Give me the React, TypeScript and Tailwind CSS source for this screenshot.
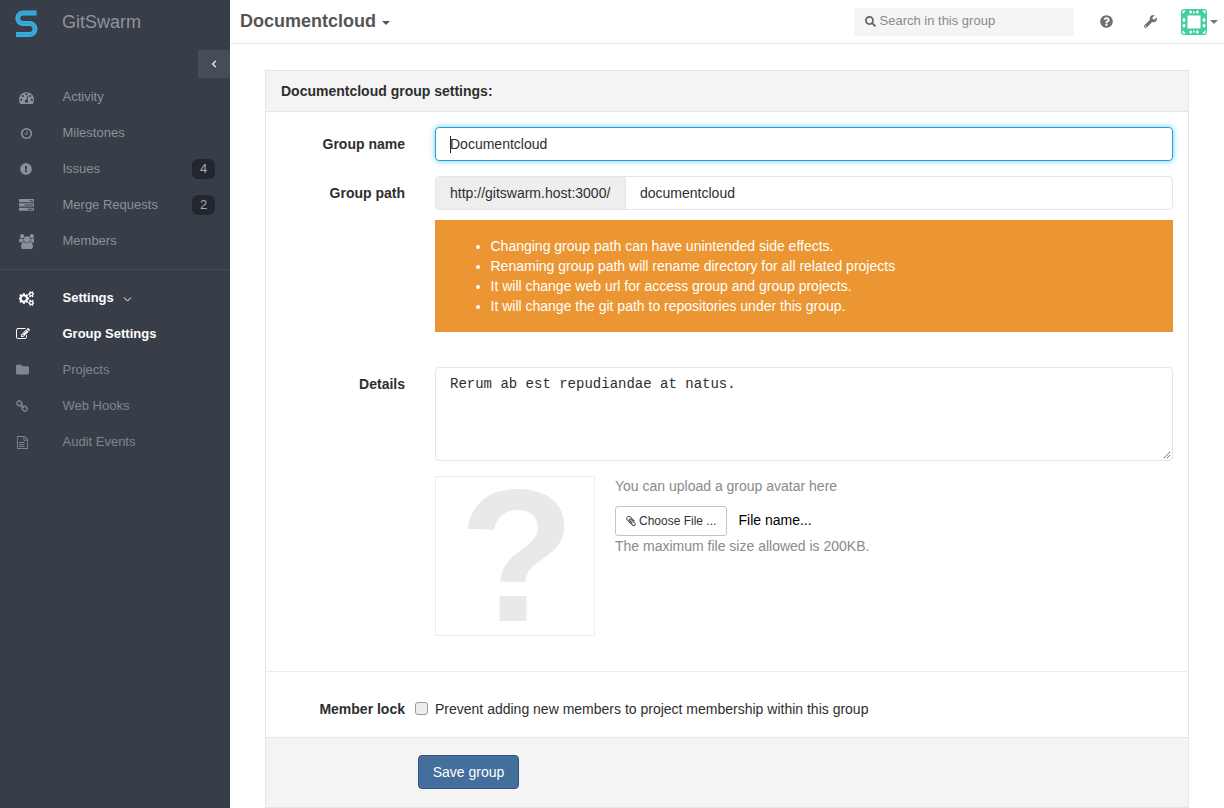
import React from "react";
import { FaExclamationCircle, FaFolder, FaQuestionCircle, FaWrench, FaSearch, FaChevronLeft } from "react-icons/fa";

const P = {
  dashboard: "M384 1152q0-53-37.500-90.500t-90.500-37.500-90.500 37.500-37.500 90.500 37.500 90.500 90.500 37.500 90.500-37.500 37.500-90.500zm192-448q0-53-37.500-90.500t-90.500-37.500-90.500 37.500-37.500 90.500 37.500 90.500 90.500 37.500 90.500-37.500 37.500-90.500zm428 481l101-382q6-26-7.500-48.500t-38.500-29.500-48 6.500-30 39.500l-101 382q-60 5-107 43.500t-63 98.500q-20 77 20 146t117 89 146-20 89-117q16-60-6-117t-72-91zm660-33q0-53-37.500-90.500t-90.500-37.500-90.500 37.500-37.500 90.500 37.500 90.500 90.500 37.500 90.500-37.500 37.500-90.500zm-640-640q0-53-37.500-90.500t-90.500-37.500-90.500 37.500-37.500 90.500 37.500 90.500 90.500 37.500 90.500-37.500 37.500-90.500zm448 192q0-53-37.500-90.500t-90.500-37.500-90.500 37.500-37.500 90.500 37.500 90.500 90.500 37.500 90.500-37.500 37.500-90.500zm320 448q0 261-141 483-19 29-54 29h-1402q-35 0-54-29-141-221-141-483 0-182 71-348t191-286 286-191 348-71 348 71 286 191 191 286 71 348z",
  clock: "M1024 544v448q0 14-9 23t-23 9h-320q-14 0-23-9t-9-23v-64q0-14 9-23t23-9h224v-352q0-14 9-23t23-9h64q14 0 23 9t9 23zm416 352q0-148-73-273t-198-198-273-73-273 73-198 198-73 273 73 273 198 198 273 73 273-73 198-198 73-273zm224 0q0 209-103 385.500t-279.500 279.500-385.500 103-385.500-103-279.500-279.500-103-385.500 103-385.500 279.500-279.500 385.500-103 385.500 103 279.500 279.500 103 385.500z",
  tasks: "M1024 1408h640v-128h-640v128zm-384-512h1024v-128h-1024v128zm640-512h384v-128h-384v128zm512 832v256q0 26-19 45t-45 19h-1664q-26 0-45-19t-19-45v-256q0-26 19-45t45-19h1664q26 0 45 19t19 45zm0-512v256q0 26-19 45t-45 19h-1664q-26 0-45-19t-19-45v-256q0-26 19-45t45-19h1664q26 0 45 19t19 45zm0-512v256q0 26-19 45t-45 19h-1664q-26 0-45-19t-19-45v-256q0-26 19-45t45-19h1664q26 0 45 19t19 45z",
  users: "M593 896q-162 5-265 128h-134q-82 0-138-40.500t-56-118.500q0-353 124-353 6 0 43.500 21t97.500 42.500 119 21.500q67 0 133-23-5 37-5 66 0 139 81 256zm1071 637q0 120-73 189.500t-194 69.500h-874q-121 0-194-69.500t-73-189.500q0-53 3.500-103.500t14-109 26.500-108.500 43-97.500 62-81 85.500-53.500 111.500-20q10 0 43 21.500t73 48 107 48 135 21.500 135-21.500 107-48 73-48 43-21.500q61 0 111.500 20t85.500 53.500 62 81 43 97.500 26.500 108.500 14 109 3.500 103.500zm-1024-1277q0 106-75 181t-181 75-181-75-75-181 75-181 181-75 181 75 75 181zm704 384q0 159-112.500 271.500t-271.500 112.500-271.500-112.500-112.500-271.500 112.500-271.500 271.500-112.500 271.500 112.500 112.500 271.500zm576 225q0 78-56 118.500t-138 40.500h-134q-103-123-265-128 81-117 81-256 0-29-5-66 66 23 133 23 59 0 119-21.500t97.500-42.500 43.500-21q124 0 124 353zm-128-609q0 106-75 181t-181 75-181-75-75-181 75-181 181-75 181 75 75 181z",
  cogs: "M832 896q0-106-75-181t-181-75-181 75-75 181 75 181 181 75 181-75 75-181zm768 512q0-52-38-90t-90-38-90 38-38 90q0 53 37.500 90.500t90.500 37.500 90.500-37.500 37.500-90.500zm0-1024q0-52-38-90t-90-38-90 38-38 90q0 53 37.500 90.500t90.500 37.500 90.500-37.500 37.500-90.500zm-384 421v185q0 10-7 19.500t-16 10.500l-155 24q-11 35-32 76 34 48 90 115 7 11 7 20 0 12-7 19-23 30-82.500 89.500t-78.500 59.500q-11 0-21-7l-115-90q-37 19-77 31-11 108-23 155-7 24-30 24h-186q-11 0-20-7.500t-10-17.500l-23-153q-34-10-75-31l-118 89q-7 7-20 7-11 0-21-8-144-133-144-160 0-9 7-19 10-14 41-53t47-61q-23-44-35-82l-152-24q-10-1-17-9.500t-7-19.500v-185q0-10 7-19.500t16-10.500l155-24q11-35 32-76-34-48-90-115-7-11-7-20 0-12 7-20 22-30 82-89t79-59q11 0 21 7l115 90q34-18 77-32 11-108 23-154 7-24 30-24h186q11 0 20 7.500t10 17.500l23 153q34 10 75 31l118-89q8-7 20-7 11 0 21 8 144 133 144 160 0 8-7 19-12 16-42 54t-45 60q23 48 34 82l152 23q10 2 17 10.500t7 19.500zm640 533v140q0 16-149 31-12 27-30 52 51 113 51 138 0 4-4 7-122 71-124 71-8 0-46-47t-52-68q-20 2-30 2t-30-2q-14 21-52 68t-46 47q-2 0-124-71-4-3-4-7 0-25 51-138-18-25-30-52-149-15-149-31v-140q0-16 149-31 13-29 30-52-51-113-51-138 0-4 4-7 4-2 35-20t59-34 30-16q8 0 46 46.500t52 67.500q20-2 30-2t30 2q51-71 92-112l6-2q4 0 124 70 4 3 4 7 0 25-51 138 17 23 30 52 149 15 149 31zm0-1024v140q0 16-149 31-12 27-30 52 51 113 51 138 0 4-4 7-122 71-124 71-8 0-46-47t-52-68q-20 2-30 2t-30-2q-14 21-52 68t-46 47q-2 0-124-71-4-3-4-7 0-25 51-138-18-25-30-52-149-15-149-31v-140q0-16 149-31 13-29 30-52-51-113-51-138 0-4 4-7 4-2 35-20t59-34 30-16q8 0 46 46.500t52 67.500q20-2 30-2t30 2q51-71 92-112l6-2q4 0 124 70 4 3 4 7 0 25-51 138 17 23 30 52 149 15 149 31z",
  edit: "M888 1184l116-116-152-152-116 116v56h96v96h56zm440-720q-16-16-33 1l-350 350q-17 17-1 33t33-1l350-350q17-17 1-33zm80 594v190q0 119-84.500 203.500t-203.500 84.500h-832q-119 0-203.500-84.500t-84.500-203.500v-832q0-119 84.500-203.500t203.500-84.500h832q63 0 117 25 15 7 18 23 3 17-9 29l-49 49q-14 14-32 8-23-6-45-6h-832q-66 0-113 47t-47 113v832q0 66 47 113t113 47h832q66 0 113-47t47-113v-126q0-13 9-22l64-64q15-15 35-7t20 29zm-96-738l288 288-672 672h-288v-288zm444 132l-92 92-288-288 92-92q28-28 68-28t68 28l152 152q28 28 28 68t-28 68z",
  link: "M1456 1216q0-40-28-68l-208-208q-28-28-68-28-42 0-72 32 3 3 19 18.500t21.500 21.500 15 19 13 25.500 3.500 27.500q0 40-28 68t-68 28q-15 0-27.500-3.500t-25.500-13-19-15-21.500-21.500-18.500-19q-33 31-33 73 0 40 28 68l206 207q27 27 68 27 40 0 68-26l147-146q28-28 28-67zm-703-705q0-40-28-68l-206-207q-28-28-68-28-39 0-68 27l-147 146q-28 28-28 67 0 40 28 68l208 208q27 27 68 27 42 0 72-31-3-3-19-18.500t-21.500-21.500-15-19-13-25.500-3.500-27.500q0-40 28-68t68-28q15 0 27.500 3.500t25.500 13 19 15 21.500 21.500 18.500 19q33-31 33-73zm895 705q0 120-85 203l-147 146q-83 83-203 83-121 0-204-85l-206-207q-83-83-83-203 0-123 88-209l-88-88q-86 88-208 88-120 0-204-84l-208-208q-84-84-84-204t85-203l147-146q83-83 203-83 121 0 204 85l206 207q83 83 83 203 0 123-88 209l88 88q86-88 208-88 120 0 204 84l208 208q84 84 84 204z",
  file: "M1596 380q28 28 48 76t20 88v1152q0 40-28 68t-68 28h-1344q-40 0-68-28t-28-68v-1600q0-40 28-68t68-28h896q40 0 88 20t76 48zm-444-244v376h376q-10-29-22-41l-313-313q-12-12-41-22zm384 1528v-1024h-416q-40 0-68-28t-28-68v-416h-768v1536h1280zm-1128-800q0-14 9-23t23-9h704q14 0 23 9t9 23v64q0 14-9 23t-23 9h-704q-14 0-23-9t-9-23v-64zm736 224q14 0 23 9t9 23v64q0 14-9 23t-23 9h-704q-14 0-23-9t-9-23v-64q0-14 9-23t23-9h704zm0 256q14 0 23 9t9 23v64q0 14-9 23t-23 9h-704q-14 0-23-9t-9-23v-64q0-14 9-23t23-9h704z",
  clip: "M1596 1385q0 117-79 196t-196 79q-135 0-235-100l-777-776q-113-115-113-271 0-159 110-270t269-111q158 0 273 113l605 606q10 10 10 22 0 16-30.500 46.500t-46.500 30.500q-13 0-23-10l-606-607q-79-77-181-77-106 0-179 75t-73 181q0 105 76 181l776 777q63 63 145 63 64 0 106-42t42-106q0-82-63-145l-581-581q-26-24-60-24-29 0-48 19t-19 48q0 32 25 59l410 410q10 10 10 22 0 16-31 47t-47 31q-12 0-22-10l-410-410q-63-61-63-149 0-82 57-139t139-57q88 0 149 63l581 581q100 98 100 235z",
};

function Fa({ d, size = 14, className = "" }: { d: string; size?: number; className?: string }) {
  return (
    <svg width={size} height={size} viewBox="0 0 1792 1792" fill="currentColor" className={className}>
      <path d={d} />
    </svg>
  );
}

function Logo() {
  const d = "M21.500 3H8A5.250 5.250 0 0 0 8 13.500H14.500A5.250 5.250 0 0 1 14.500 24.500H1";
  return (
    <svg width="23" height="28" viewBox="0 0 23 28" fill="none">
      <path d={d} stroke="#38addf" strokeWidth="5" />
      <path d={d} stroke="#2f96c9" strokeWidth="0.8" />
    </svg>
  );
}

function Identicon() {
  const tri = "M1.500 1.500h3.500l-3.500 3.500zM24.500 1.500v3.500l-3.500-3.500zM1.500 24.500v-3.500l3.500 3.500zM24.500 24.500h-3.500l3.500-3.500z";
  const arrows = "M9.500 1l1.800 2-1.800 2-1.300-2zM16.500 1l1.300 2-1.300 2-1.800-2zM9.500 21l1.800 2-1.800 2-1.300-2zM16.500 21l1.300 2-1.300 2-1.800-2zM3 8.500l1.800 2.500-1.800 2.500-1.800-2.500zM23 8.500l1.800 2.500-1.800 2.500-1.800-2.500zM3 14.500l1.800 2-1.800 2.500-1.800-2.500zM23 14.500l1.800 2-1.800 2.500-1.800-2.500zM12.200 2.500h1.600v2h-1.600zM12.200 21.500h1.600v2h-1.600z";
  return (
    <svg width="26" height="26" viewBox="0 0 26 26">
      <rect width="26" height="26" rx="3" fill="#42cfa0" />
      <rect x="6.500" y="6.500" width="13" height="13" fill="#fff" />
      <path d={tri} fill="#fff" />
      <path d={arrows} fill="#fff" />
    </svg>
  );
}

function Item({ icon, label, badge, indent = false, active = false, chevron = false, dim = false }: { icon: React.ReactNode; label: string; badge?: string; indent?: boolean; active?: boolean; chevron?: boolean; dim?: boolean }) {
  return (
    <div className={`h-9 flex items-center text-[13px] ${active ? "text-white font-bold" : dim ? "text-[#80868e]" : "text-[#8b9199]"}`}>
      <div className={`${indent ? "pl-4" : "pl-[19px]"} w-[62.5px] flex items-center shrink-0`}>{icon}</div>
      <span>{label}</span>
      {chevron && (
        <svg className="ml-[9px] mt-px" width="9" height="6" viewBox="0 0 9 6" fill="none">
          <path d="M1 1.500l3.500 3.500L8 1.500" stroke="currentColor" strokeWidth="1" />
        </svg>
      )}
      {badge && (
        <span className="ml-auto mr-[15px] w-[23px] h-5 rounded-[6px] bg-[#22262e] text-[#a4a9b0] font-normal text-[13px] flex items-center justify-center">{badge}</span>
      )}
    </div>
  );
}

export default function App() {
  return (
    <div className="flex h-[808px] w-[1224px] overflow-hidden bg-white text-[#2e2e2e] font-['Liberation_Sans',Arial,sans-serif] text-sm">
      <aside className="w-[230px] shrink-0 bg-[#383e48] flex flex-col">
        <div className="h-[50px] flex items-center pl-[15px] pb-[3px]">
          <Logo />
          <span className="ml-[24px] -mt-[2px] text-[18px] text-[#8e949c]">GitSwarm</span>
        </div>
        <div className="flex justify-end">
          <div className="w-8 h-7 bg-[#474d57] flex items-center justify-center text-white"><FaChevronLeft className="text-[8px]" /></div>
        </div>
        <nav className="mt-[1px]">
          <Item icon={<Fa d={P.dashboard} size={15} />} label="Activity" />
          <Item icon={<Fa d={P.clock} size={13} className="ml-px" />} label="Milestones" />
          <Item icon={<FaExclamationCircle className="text-[12px] ml-px" />} label="Issues" badge="4" />
          <Item icon={<Fa d={P.tasks} size={15} />} label="Merge Requests" badge="2" />
          <Item icon={<Fa d={P.users} size={15} />} label="Members" />
        </nav>
        <div className="border-t border-[#484e58] mt-[10px] mb-[10px]" />
        <nav>
          <Item icon={<Fa d={P.cogs} size={15} />} label="Settings" active chevron />
          <Item indent icon={<Fa d={P.edit} size={14} />} label="Group Settings" active />
          <Item indent dim icon={<FaFolder className="text-[13px] -mt-[2px]" />} label="Projects" />
          <Item indent dim icon={<Fa d={P.link} size={13} />} label="Web Hooks" />
          <Item indent dim icon={<Fa d={P.file} size={13} />} label="Audit Events" />
        </nav>
      </aside>

      <main className="flex-1 min-w-0 flex flex-col">
        <header className="h-[44px] shrink-0 border-b border-[#e9e9e9] flex items-center pl-[10px]">
          <span className="text-[18px] font-bold text-[#555]">Documentcloud</span>
          <span className="ml-[6px] mt-[3px] w-0 h-0 border-x-[4px] border-x-transparent border-t-[4px] border-t-[#555]" />
          <div className="ml-auto w-[220px] h-[28px] bg-[#f5f5f5] rounded-[3px] flex items-center pl-[11px] text-[13px] text-[#8a8a8a]">
            <FaSearch className="text-[11px] text-[#666] mr-[4px]" />
            <span>Search in this group</span>
          </div>
          <FaQuestionCircle className="ml-[26px] text-[13px] text-[#707070]" />
          <FaWrench className="ml-[31.500px] text-[13px] text-[#707070]" />
          <div className="ml-[24px] flex items-center mr-[6px]">
            <Identicon />
            <span className="ml-[3px] w-0 h-0 border-x-[4px] border-x-transparent border-t-[4px] border-t-[#777]" />
          </div>
        </header>

        <div className="flex-1 px-[35px] pt-[26px]">
          <div className="w-[924px] h-[738px] border border-[#e5e5e5] flex flex-col">
            <div className="h-[41px] shrink-0 bg-[#f4f4f4] border-b border-[#e5e5e5] flex items-center pl-[15px] font-bold">Documentcloud group settings:</div>

            <div className="pt-[15px] pr-[15px]">
              <div className="flex h-[34px] items-center">
                <label className="w-[139px] text-right font-bold">Group name</label>
                <div className="ml-[30px] flex-1 h-[34px] rounded-[4px] border border-[#1aa3dc] shadow-[0_0_6px_rgba(26,163,220,0.6)] flex items-center pl-[14px]">
                  <span className="w-px h-[17px] bg-[#222] -mr-px" />
                  Documentcloud
                </div>
              </div>
              <div className="flex h-[34px] items-center mt-[15px]">
                <label className="w-[139px] text-right font-bold">Group path</label>
                <div className="ml-[30px] flex-1 h-[34px] rounded-[4px] border border-[#e5e5e5] flex items-center overflow-hidden">
                  <span className="h-full w-[190px] bg-[#eeeeee] border-r border-[#e5e5e5] flex items-center pl-[14px]">http://gitswarm.host:3000/</span>
                  <span className="pl-[14px]">documentcloud</span>
                </div>
              </div>
              <div className="ml-[169px] mt-[10px] h-[112px] bg-[#ec9633] text-white pt-[16px]">
                <ul className="list-disc pl-[55.500px] leading-5">
                  <li>Changing group path can have unintended side effects.</li>
                  <li>Renaming group path will rename directory for all related projects</li>
                  <li>It will change web url for access group and group projects.</li>
                  <li>It will change the git path to repositories under this group.</li>
                </ul>
              </div>

              <div className="flex mt-[35px]">
                <label className="w-[139px] text-right font-bold pt-[7px]">Details</label>
                <div className="ml-[30px] flex-1 h-[94px] rounded-[4px] border border-[#e5e5e5] px-[14px] py-[6px] font-['Liberation_Mono',monospace] text-sm leading-5 relative">
                  Rerum ab est repudiandae at natus.
                  <svg className="absolute right-[1px] bottom-[1px]" width="8" height="8" viewBox="0 0 8 8"><path d="M7 1L1 7M7 4L4 7" stroke="#777" strokeWidth="1" /></svg>
                </div>
              </div>

              <div className="flex ml-[169px] mt-[15px] h-[160px]">
                <div className="w-[160px] h-[160px] border border-[#ededed] flex items-center justify-center pl-[4px]">
                  <span className="text-[#e9e9e9] font-bold text-[190px] leading-[158px] -translate-y-[1px]">?</span>
                </div>
                <div className="ml-[20px]">
                  <p className="text-[#8a8a8a] leading-5">You can upload a group avatar here</p>
                  <div className="flex items-center mt-[10px]">
                    <div className="w-[112px] h-[30px] border border-[#c4c4c4] rounded-[3px] flex items-center pl-[9px] text-xs text-[#333]">
                      <Fa d={P.clip} size={12} className="mr-[2px]" />Choose File ...
                    </div>
                    <span className="ml-[11.500px] mb-[2px] text-black">File name...</span>
                  </div>
                  <p className="text-[#8a8a8a] leading-5">The maximum file size allowed is 200KB.</p>
                </div>
              </div>
            </div>

            <div className="border-t border-[#ededed] mt-[35px] h-[66px] shrink-0 flex items-center pb-[8px] pt-[16px]">
              <label className="w-[139px] text-right font-bold">Member lock</label>
              <span className="ml-[9.500px] w-[13px] h-[13px] rounded-[3px] border border-[#999] bg-[#ededed] shrink-0" />
              <span className="ml-[7.500px]">Prevent adding new members to project membership within this group</span>
            </div>
            <div className="flex-1 bg-[#f4f4f4] border-t border-[#e5e5e5] pl-[152px] pt-[17px]">
              <button className="w-[101px] h-[34px] rounded-[4px] bg-[#446e9b] border border-[#345578] text-white">Save group</button>
            </div>
          </div>
        </div>
      </main>
    </div>
  );
}
